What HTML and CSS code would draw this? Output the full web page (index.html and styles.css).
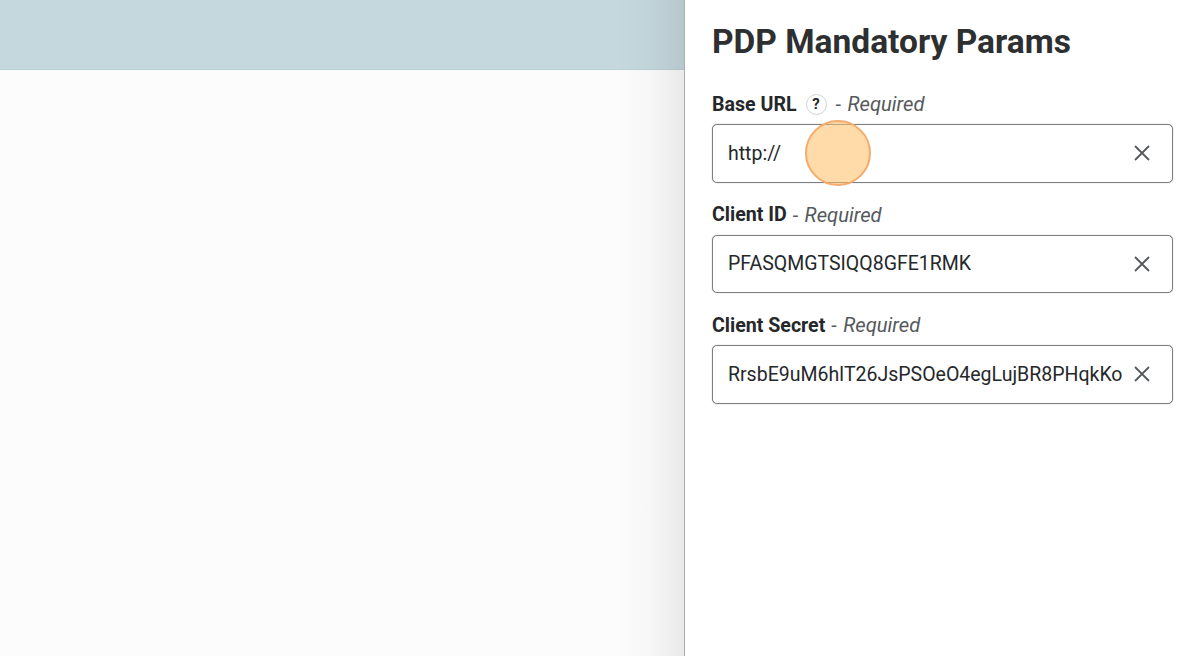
FILE: index.html
```html
<!DOCTYPE html>
<html lang="en">
<head>
<meta charset="utf-8">
<title>PDP Mandatory Params</title>
<link rel="stylesheet" href="styles.css">
</head>
<body>
<div class="page">
  <main class="backdrop">
    <div class="band"></div>
    <div class="shade"></div>
  </main>
  <aside class="panel">
    <h1 class="title">PDP Mandatory Params</h1>
    <div class="field">
      <div class="label"><b>Base URL</b><span class="help">?</span><i>- Required</i></div>
      <div class="input">
        <span class="value">http://</span>
        <svg class="clear" viewBox="0 0 16 16"><path d="M1 1L15 15M15 1L1 15"/></svg>
        <span class="cursor"></span>
      </div>
    </div>
    <div class="field">
      <div class="label"><b>Client ID</b><i>- Required</i></div>
      <div class="input">
        <span class="value">PFASQMGTSIQQ8GFE1RMK</span>
        <svg class="clear" viewBox="0 0 16 16"><path d="M1 1L15 15M15 1L1 15"/></svg>
      </div>
    </div>
    <div class="field">
      <div class="label"><b>Client Secret</b><i>- Required</i></div>
      <div class="input">
        <span class="value">RrsbE9uM6hlT26JsPSOeO4egLujBR8PHqkKo</span>
        <svg class="clear" viewBox="0 0 16 16"><path d="M1 1L15 15M15 1L1 15"/></svg>
      </div>
    </div>
  </aside>
</div>
</body>
</html>
```

FILE: styles.css
```css
* { box-sizing: border-box; }
html, body { margin: 0; height: 100%; }
body { font-family: Roboto, "Liberation Sans", sans-serif; background: #fff; overflow: hidden; }
.page { display: flex; width: 1200px; height: 656px; }
.backdrop { position: relative; width: 684px; flex: none; background: #fcfcfc; }
.band { height: 70px; background: #c5d8dd; border-bottom: 1px solid #bccfd4; }
.shade { position: absolute; top: 0; right: 0; bottom: 0; width: 70px; background: linear-gradient(to right, rgba(0,0,0,0), rgba(0,0,0,0.02) 50%, rgba(0,0,0,0.075)); }
.panel { flex: 1; background: #fff; border-left: 1px solid #a9abac; padding: 21px 27.5px 0 27px; }
.title { margin: 0 0 29px; font-size: 33.5px; line-height: 42px; font-weight: 700; color: #2d2f30; }
.field { margin-bottom: 20px; }
.label { display: flex; align-items: center; height: 24px; margin-bottom: 8px; font-size: 19.6px; color: #25282a; }
.label b { font-weight: 700; }
.label i { margin-left: 6px; color: #55595c; font-weight: 400; font-size: 20.2px; word-spacing: 1.5px; }
.help { display: flex; align-items: center; justify-content: center; width: 21px; height: 21px; margin: 0 3px 0 9px; border: 1px solid #cfd2d3; border-radius: 50%; font-size: 15px; font-weight: 700; }
.input { position: relative; display: flex; align-items: center; justify-content: space-between; height: 58.5px; padding: 0 22px 0 15px; border: 1px solid #7c7f81; border-radius: 5px; background: #fff; box-shadow: 0 0 1px rgba(0, 0, 0, 0.45); }
.value { font-size: 19.5px; color: #25282a; white-space: nowrap; }
.clear { width: 16px; height: 16px; flex: none; fill: none; stroke: #55595c; stroke-width: 1.8; }
.cursor { position: absolute; left: 91.5px; top: -5px; width: 66px; height: 66px; border: 2px solid #f3ac6c; border-radius: 50%; background: rgba(255, 190, 100, 0.55); }
```
